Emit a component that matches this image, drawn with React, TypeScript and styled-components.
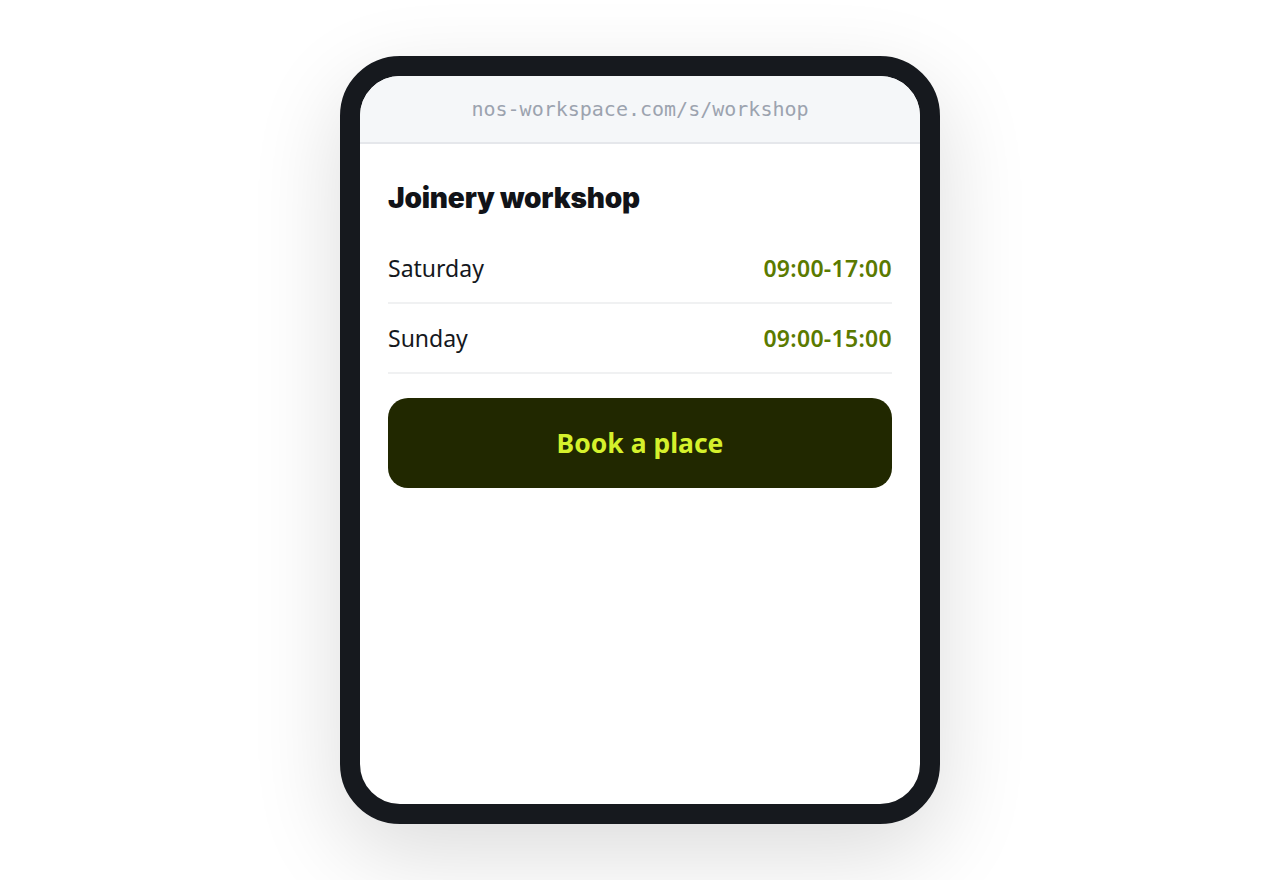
import React from 'react';
import styled, {createGlobalStyle} from 'styled-components';

const Global = createGlobalStyle`
  html, body {
    margin: 0;
    padding: 0;
    background: #fff;
  }
`;

const Page = styled.div`
  min-height: 880px;
  display: flex;
  align-items: center;
  justify-content: center;
  font-family: 'Noto Sans', 'Open Sans', sans-serif;
`;

const Phone = styled.div`
  width: 560px;
  height: 728px;
  border: 20px solid #16191e;
  border-radius: 60px;
  background: #fff;
  overflow: hidden;
  display: flex;
  flex-direction: column;
  box-shadow: 0 30px 90px rgba(0, 0, 0, 0.14);
`;

const UrlBar = styled.div`
  height: 66px;
  flex-shrink: 0;
  display: flex;
  align-items: center;
  justify-content: center;
  background: #f5f7f9;
  border-bottom: 2px solid #e5e7eb;
  color: #9ca3af;
  font-family: 'DejaVu Sans Mono', 'Liberation Mono', monospace;
  font-size: 20px;
`;

const Content = styled.div`
  padding: 37px 28px 28px;
  display: flex;
  flex-direction: column;
`;

const Title = styled.h1`
  margin: 0 0 19px;
  font-family: Inter, 'Noto Sans', sans-serif;
  font-size: 28px;
  line-height: 34px;
  font-weight: 900;
  letter-spacing: -0.2px;
  color: #111318;
`;

const Row = styled.div`
  height: 68px;
  display: flex;
  align-items: center;
  justify-content: space-between;
  border-bottom: 2px solid #f0f1f2;
  font-size: 23px;
`;

const Day = styled.span`
  color: #15181d;
`;

const Hours = styled.span`
  color: #5b7a00;
  font-weight: 600;
  letter-spacing: 0.3px;
`;

const BookButton = styled.button`
  margin-top: 24px;
  height: 90px;
  border: none;
  border-radius: 20px;
  background: #212800;
  color: #d5f12c;
  font-family: 'Noto Sans', 'Open Sans', sans-serif;
  font-size: 26.5px;
  font-weight: 700;
  cursor: pointer;
`;

const schedule = [
  {day: 'Saturday', hours: '09:00-17:00'},
  {day: 'Sunday', hours: '09:00-15:00'},
];

export default function App() {
  return (
    <Page>
      <Global />
      <Phone>
        <UrlBar>nos-workspace.com/s/workshop</UrlBar>
        <Content>
          <Title>Joinery workshop</Title>
          {schedule.map(item => (
            <Row key={item.day}>
              <Day>{item.day}</Day>
              <Hours>{item.hours}</Hours>
            </Row>
          ))}
          <BookButton>Book a place</BookButton>
        </Content>
      </Phone>
    </Page>
  );
}
